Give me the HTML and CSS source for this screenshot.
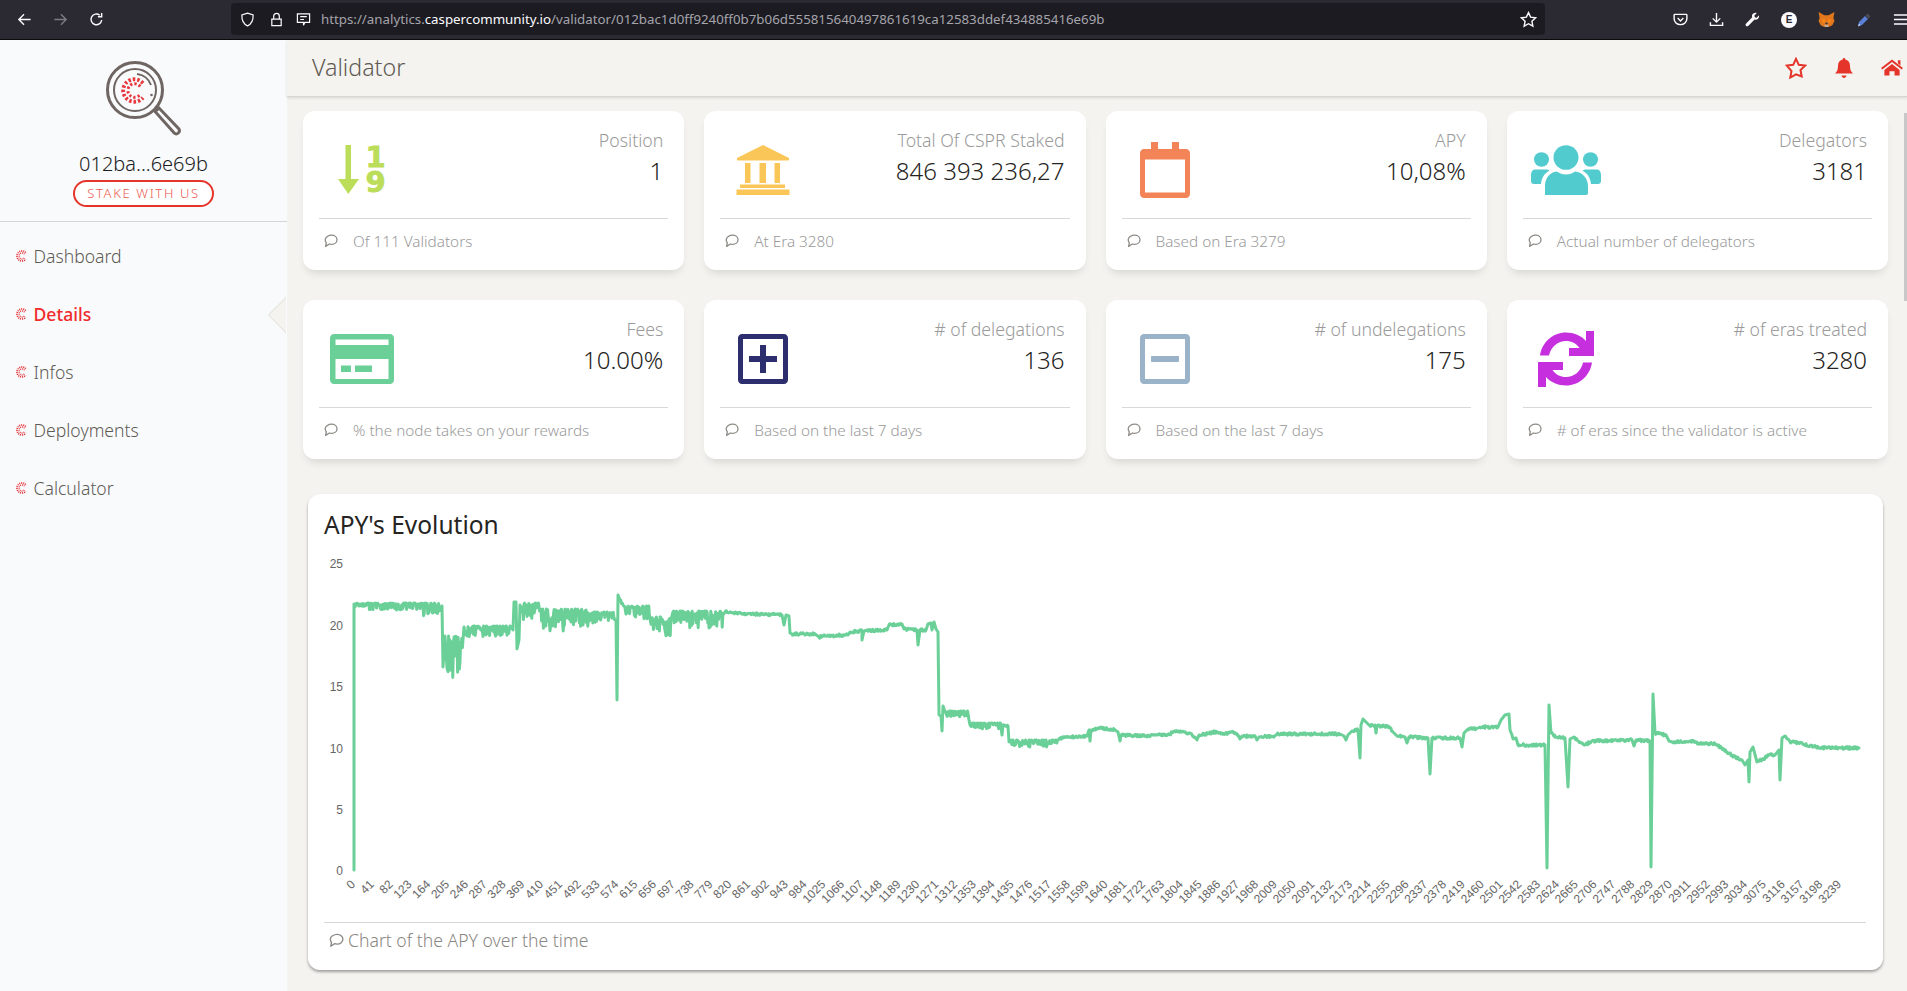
FILE: index.html
```html
<!DOCTYPE html>
<html lang="en">
<head>
<meta charset="utf-8">
<title>Validator</title>
<link rel="stylesheet" href="styles.css">
</head>
<body>
<svg class="defs" width="0" height="0" aria-hidden="true">
  <symbol id="cmark" viewBox="0 0 24 24">
    <path d="M19.5 5.5A10 10 0 1 0 19.5 18.5" fill="none" stroke="#e8383d" stroke-width="3.4" stroke-dasharray="2.2 1.7"/>
    <path d="M17 8.5A6 6 0 1 0 17 15.5" fill="none" stroke="#e8383d" stroke-width="2.6" stroke-dasharray="2 1.8"/>
  </symbol>
  <symbol id="bubble" viewBox="0 0 16 16">
    <path d="M8.6 2.2c3 0 5.4 2 5.4 4.6s-2.4 4.6-5.4 4.6c-.8 0-1.5-.1-2.2-.4L2.6 13.4l.7-3.6C2.6 9 2.2 7.9 2.2 6.800 2.200 4.200 5.600 2.200 8.600 2.200z" fill="none" stroke="#8d8a86" stroke-width="1.300" stroke-linejoin="round"/>
  </symbol>
</svg>

<div class="toolbar">
  <div class="tool-group nav-tools">
    <svg class="ti" viewBox="0 0 16 16"><path d="M14.500 8H2M7.500 2.500 2 8l5.500 5.500" /></svg>
    <svg class="ti dim" viewBox="0 0 16 16"><path d="M1.500 8H14M8.500 2.500 14 8l-5.500 5.500" /></svg>
    <svg class="ti" viewBox="0 0 16 16"><path d="M13.500 8.500A5.700 5.700 0 1 1 11.500 3.500M13.500 1v4h-4" /></svg>
  </div>
  <div class="urlbar">
    <svg class="ui shield" viewBox="0 0 16 16"><path d="M8 1.200 14 3.200c.2 6-2 9.800-6 11.600-4-1.800-6.200-5.600-6-11.600z" /></svg>
    <svg class="ui lock" viewBox="0 0 16 16"><path d="M3 7.500h10v7H3zM5 7.500V4.500a3 3 0 0 1 6 0v3" /></svg>
    <svg class="ui msg" viewBox="0 0 16 16"><path d="M1.500 2h13v9H9.500L8 14v-3H1.500zM4.500 5h7M4.500 8h4" /></svg>
    <span class="url">https://analytics.<b>caspercommunity.io</b>/validator/012bac1d0ff9240ff0b7b06d555815640497861619ca12583ddef434885416e69b</span>
    <svg class="ui urlstar" viewBox="0 0 16 16"><path d="m8 1.500 2 4.300 4.700.6-3.500 3.200.9 4.700L8 12l-4.100 2.300.9-4.700L1.300 6.400 6 5.800z" /></svg>
  </div>
  <div class="tool-group ext-tools">
    <svg class="ti" viewBox="0 0 16 16"><path d="M2 2.500h12c.5 0 .8.300.8.800v4c0 3.500-3 6.200-6.800 6.200S1.200 10.800 1.200 7.300v-4c0-.5.300-.8.800-.8zM5 6.500l3 3 3-3" /></svg>
    <svg class="ti" viewBox="0 0 16 16"><path d="M8 1v9.500M4 6.800l4 4 4-4M1.500 11v3.300h13V11" /></svg>
    <svg class="ti solid" viewBox="0 0 16 16"><path d="M15 3.500 12.300 6 10.500 5.500 10 3.700 12.500 1C10.500.4 8 1.300 7.500 3.500c-.2.800-.1 1.500.2 2.200L1 12.500c-.700.800-.300 1.800.2 2.300.6.500 1.500.6 2.200 0l6.800-6.700c2.500.8 5.300-.9 4.800-4.600z" /></svg>
    <span class="ext-e">E</span>
    <svg class="fox" viewBox="0 0 16 16"><path fill="#e2761b" d="M.500 1 6 4h4l5.500-3-1 5.500 1 3-2 4L10 15H6l-3.500-1.500-2-4 1-3z"/><path fill="#f6851b" d="M4 7l2.500.5L7 11H4zM12 7l-2.500.5L9 11h3z"/><path fill="#c0ad9e" d="M6 13h4l-.5 2h-3z"/><path fill="#233447" d="M6.500 11h3l-1 1.500h-1z"/></svg>
    <svg class="pen" viewBox="0 0 16 16"><path fill="#5b7fd6" d="M2 14.500 3 10l6-6 3 3-6 6z"/><path fill="#4a4a55" d="m9.500 3.500 2-2 3 3-2 2z"/><path fill="#cfd6f2" d="M2 14.500 3 11.500 4.500 13z"/></svg>
    <svg class="ti" viewBox="0 0 16 16"><path d="M1 3.200h14M1 8h14M1 12.800h14" /></svg>
  </div>
</div>

<div class="app">
  <aside class="sidebar">
    <div class="brand">
      <svg class="logo" viewBox="0 0 76 76">
        <circle class="ring" cx="29" cy="29" r="27.500"/>
        <circle class="ring thin" cx="29" cy="29" r="21"/>
        <path class="ring thin" d="M31 13A16.500 16.500 0 0 1 45 24"/>
        <circle cx="45.500" cy="34" r="1.300" fill="#6f6562"/>
        <path class="ring" d="M49 50.500l4-3.500 19.500 20.500c1.500 1.800 1 3.300-.2 4.500-1.300 1.200-3 1.200-4.300-.2z"/>
        <use href="#cmark" x="15" y="16" width="27" height="27"/>
      </svg>
      <div class="address">012ba...6e69b</div>
      <a class="stake">STAKE WITH US</a>
    </div>
    <nav class="menu">
      <a class="menu-item"><svg class="mi"><use href="#cmark"/></svg>Dashboard</a>
      <a class="menu-item active"><svg class="mi"><use href="#cmark"/></svg>Details</a>
      <a class="menu-item"><svg class="mi"><use href="#cmark"/></svg>Infos</a>
      <a class="menu-item"><svg class="mi"><use href="#cmark"/></svg>Deployments</a>
      <a class="menu-item"><svg class="mi"><use href="#cmark"/></svg>Calculator</a>
    </nav>
  </aside>

  <main class="main">
    <header class="topbar">
      <h1 class="page-title">Validator</h1>
      <div class="top-icons">
        <svg class="ri star" viewBox="0 0 22 22"><path d="m11 1.800 2.800 6 6.400.8-4.700 4.400 1.200 6.500L11 17.300l-5.700 3.200 1.200-6.500L1.800 8.600l6.400-.8z"/></svg>
        <svg class="ri bell" viewBox="0 0 18 20"><path d="M9 0c.8 0 1.300.6 1.300 1.400C13 2 15 4.200 15 7.500c0 4.500 1 6 3 8H0c2-2 3-3.500 3-8 0-3.300 2-5.500 4.700-6.100C7.700.6 8.200 0 9 0zM6.500 17.500h5C11.200 19 10.200 20 9 20s-2.200-1-2.500-2.500z"/></svg>
        <svg class="ri home" viewBox="0 0 26 19"><path d="M13 0 26 10l-1.500 1.800L13 3 1.500 11.800 0 10zM20 1h3v6l-3-2.400zM4 12.500 13 5.500l9 7V19h-6v-5h-6v5H4z"/></svg>
      </div>
    </header>

    <div class="scrollthumb"></div>

    <div class="content">
      <section class="stats">
        <article class="card">
          <div class="card-body">
            <div class="icon-slot">
              <div class="sort-icon">
                <svg width="21" height="49" viewBox="0 0 21 49"><path fill="currentColor" d="M7.500 0h5.500v34h8L10.300 49 0 34h7.500z"/></svg>
                <div class="sort-digits"><span>1</span><span>9</span></div>
              </div>
            </div>
            <div class="numbers"><p class="label">Position</p><p class="value">1</p></div>
          </div>
          <div class="card-foot"><svg class="bub"><use href="#bubble"/></svg><span>Of 111 Validators</span></div>
        </article>
        <article class="card">
          <div class="card-body">
            <div class="icon-slot">
              <svg class="ic" width="54" height="50" viewBox="0 0 54 50" style="color:#fbc658"><path fill="currentColor" d="M27 0 53 13v1.500c0 .6-.4 1-1 1H2c-.6 0-1-.4-1-1V13zM9 18h5.500v20H9zM23.500 18H30v20h-6.500zM38.500 18H44v20h-5.500zM4 39.500h45V43H4zM.5 44.500h53V50H.5z"/></svg>
            </div>
            <div class="numbers"><p class="label">Total Of CSPR Staked</p><p class="value">846 393 236,27</p></div>
          </div>
          <div class="card-foot"><svg class="bub"><use href="#bubble"/></svg><span>At Era 3280</span></div>
        </article>
        <article class="card">
          <div class="card-body">
            <div class="icon-slot">
              <svg class="ic" width="50" height="56" viewBox="0 0 50 56" style="color:#f38458"><path fill="currentColor" fill-rule="evenodd" d="M11 0h7v7h14V0h7v7h7c2.200 0 4 1.800 4 4v41c0 2.200-1.800 4-4 4H4c-2.200 0-4-1.800-4-4V11c0-2.200 1.800-4 4-4h7zM5 17.500v33h40v-33z"/></svg>
            </div>
            <div class="numbers"><p class="label">APY</p><p class="value">10,08%</p></div>
          </div>
          <div class="card-foot"><svg class="bub"><use href="#bubble"/></svg><span>Based on Era 3279</span></div>
        </article>
        <article class="card">
          <div class="card-body">
            <div class="icon-slot">
              <svg class="ic" width="70" height="50" viewBox="0 0 70 50" style="color:#51cbce"><g fill="currentColor"><ellipse cx="35" cy="12.500" rx="12.500" ry="12.300"/><ellipse cx="10.500" cy="14.500" rx="7.500" ry="7.300"/><ellipse cx="59.500" cy="14.500" rx="7.500" ry="7.300"/><path d="M14 50V41c0-8 5-14 12-14.500 2.500 2 5.500 3 9 3s6.500-1 9-3C51 27 57 33 57 41v7c0 1-1 2-2 2z"/><path d="M4 24.500h11c1.500 0 2.500.4 3.500 1.300C13.500 28 10.500 33 10 39H3c-1.700 0-3-1.300-3-3v-6c0-3 1.500-5.500 4-5.500zM66 24.500H55c-1.500 0-2.500.4-3.500 1.300C56.500 28 59.500 33 60 39h7c1.700 0 3-1.300 3-3v-6c0-3-1.500-5.500-4-5.500z"/></g></svg>
            </div>
            <div class="numbers"><p class="label">Delegators</p><p class="value">3181</p></div>
          </div>
          <div class="card-foot"><svg class="bub"><use href="#bubble"/></svg><span>Actual number of delegators</span></div>
        </article>

        <article class="card">
          <div class="card-body">
            <div class="icon-slot">
              <svg class="ic" width="64" height="50" viewBox="0 0 64 50" style="color:#6bd098"><path fill="currentColor" fill-rule="evenodd" d="M4 0h56c2.200 0 4 1.800 4 4v42c0 2.200-1.800 4-4 4H4c-2.200 0-4-1.800-4-4V4c0-2.200 1.800-4 4-4zM5.500 5.500V11h53V5.500zM5.500 25v20h53V25zM11 31.500h10v6.500H11zM25 31.500h17v6.500H25z"/></svg>
            </div>
            <div class="numbers"><p class="label">Fees</p><p class="value">10.00%</p></div>
          </div>
          <div class="card-foot"><svg class="bub"><use href="#bubble"/></svg><span>% the node takes on your rewards</span></div>
        </article>
        <article class="card">
          <div class="card-body">
            <div class="icon-slot">
              <svg class="ic" width="50" height="50" viewBox="0 0 50 50" style="color:#2c2e6d"><path fill="currentColor" fill-rule="evenodd" d="M4 0h42c2.200 0 4 1.800 4 4v42c0 2.200-1.800 4-4 4H4c-2.200 0-4-1.800-4-4V4c0-2.200 1.800-4 4-4zM5 5v40h40V5zM22 11h6v11h11v6H28v11h-6V28H11v-6h11z"/></svg>
            </div>
            <div class="numbers"><p class="label"># of delegations</p><p class="value">136</p></div>
          </div>
          <div class="card-foot"><svg class="bub"><use href="#bubble"/></svg><span>Based on the last 7 days</span></div>
        </article>
        <article class="card">
          <div class="card-body">
            <div class="icon-slot">
              <svg class="ic" width="50" height="50" viewBox="0 0 50 50" style="color:#9ab3c8"><path fill="currentColor" fill-rule="evenodd" d="M4 0h42c2.200 0 4 1.800 4 4v42c0 2.200-1.800 4-4 4H4c-2.200 0-4-1.800-4-4V4c0-2.200 1.800-4 4-4zM5 5v40h40V5zM12 22h26c.6 0 1 .4 1 1v4c0 .6-.4 1-1 1H12c-.6 0-1-.4-1-1v-4c0-.6.4-1 1-1z"/></svg>
            </div>
            <div class="numbers"><p class="label"># of undelegations</p><p class="value">175</p></div>
          </div>
          <div class="card-foot"><svg class="bub"><use href="#bubble"/></svg><span>Based on the last 7 days</span></div>
        </article>
        <article class="card">
          <div class="card-body">
            <div class="icon-slot">
              <svg class="ic" width="56" height="56" viewBox="0 0 56 56" style="color:#c62fde"><path fill="currentColor" d="M56 0v25H31v-8h10.500C38.500 12.500 33.500 10 28 10c-8 0-15 5.500-17 14.500H2C4 11 15 1.500 28 1.500c8 0 15 3 20 8.500V0zM0 56V31h25v8H14.500c3 4.500 8 7 13.500 7 8 0 15-5.500 17-14.500h9C52 45 41 54.500 28 54.500c-8 0-15-3-20-8.500v10z"/></svg>
            </div>
            <div class="numbers"><p class="label"># of eras treated</p><p class="value">3280</p></div>
          </div>
          <div class="card-foot"><svg class="bub"><use href="#bubble"/></svg><span># of eras since the validator is active</span></div>
        </article>
      </section>

      <section class="chart-card">
        <h2 class="chart-title">APY's Evolution</h2>
        <svg id="apy" class="chart" viewBox="324 546 1542 376"></svg>
        <div class="chart-foot"><svg class="bub big"><use href="#bubble"/></svg><span>Chart of the APY over the time</span></div>
      </section>
    </div>
  </main>
</div>
<script src="chart.js"></script>
</body>
</html>
```

FILE: styles.css
```css
* { box-sizing: border-box; }
html, body { margin: 0; height: 991px; overflow: hidden; }
body { font-family: "Noto Sans", "Liberation Sans", sans-serif; background: #f4f3ef; color: #252422; }
.defs { position: absolute; }
p, h1, h2 { margin: 0; font-weight: 300; }

.toolbar { height: 40px; background: #2b2a33; border-bottom: 1px solid #0c0c0d; display: flex; align-items: flex-start; }
.tool-group { display: flex; align-items: center; height: 39px; }
.nav-tools { width: 231px; flex: none; padding-left: 17px; gap: 21px; }
.ext-tools { flex: 1; padding-left: 128px; gap: 21px; }
.ti { width: 15px; height: 15px; flex: none; fill: none; stroke: #fbfbfe; stroke-width: 1.500; }
.ti.dim { stroke: #7d7c84; }
.ti.solid { fill: #fbfbfe; stroke: none; }
.urlbar { width: 1314px; flex: none; height: 32px; margin-top: 3px; background: #1c1b22; border-radius: 4px; display: flex; align-items: center; padding: 0 9px; }
.ui { width: 15px; height: 15px; flex: none; fill: none; stroke: #fbfbfe; stroke-width: 1.300; }
.lock { margin-left: 14px; }
.msg { margin-left: 12px; }
.url { margin-left: 10px; font: 13.300px/32px "Noto Sans", sans-serif; color: #a5a4aa; white-space: nowrap; flex: 1; }
.url b { font-weight: 400; color: #fbfbfe; }
.urlstar { width: 17px; height: 17px; margin-right: -1px; }
.ext-e { width: 16px; height: 16px; flex: none; border-radius: 50%; background: #fbfbfe; color: #2b2a33; font: 700 10px/16px "Liberation Sans", sans-serif; text-align: center; }
.fox { width: 17px; height: 17px; flex: none; }
.pen { width: 16px; height: 16px; flex: none; }

.app { display: flex; height: 951px; }
.sidebar { width: 287px; flex: none; background: #f8fafc; }
.brand { height: 182px; border-bottom: 1px solid #d5d5d5; display: flex; flex-direction: column; align-items: center; padding-top: 21px; }
.logo { width: 76px; height: 76px; margin-left: 1px; display: block; }
.ring { fill: none; stroke: #6f6562; stroke-width: 3; }
.ring.thin { stroke-width: 2; }
.address { font-size: 20px; line-height: 26px; font-weight: 300; color: #1c1c1c; margin-top: 14px; }
.stake { margin-top: 3px; width: 141px; height: 27px; border: 2px solid #e5352b; border-radius: 14px; color: #ec5a50; font-size: 13px; line-height: 23px; letter-spacing: 1.650px; text-align: center; font-weight: 300; background: #fff; }
.menu { padding-top: 5px; display: flex; flex-direction: column; }
.menu-item { height: 58px; display: flex; align-items: center; padding-left: 16px; padding-bottom: 1px; font-size: 17.600px; font-weight: 300; color: #5f5a54; }
.menu-item.active { color: #ef2b2b; font-weight: 500; position: relative; }
.menu-item.active::after { content: ""; position: absolute; right: -12px; top: 17px; width: 24px; height: 24px; background: #f4f3ef; border: 1px solid #e3e1dc; transform: rotate(45deg); clip-path: polygon(0 0, 0 100%, 100% 100%); }
.mi { width: 12px; height: 12px; margin-right: 5.500px; flex: none; }

.main { flex: 1; min-width: 0; position: relative; }
.topbar { height: 57px; display: flex; justify-content: space-between; align-items: center; padding: 0 4px 1px 25px; border-bottom: 1px solid #d8d6d1; box-shadow: 0 1px 3px rgba(0,0,0,.12); }
.page-title { font-size: 23.200px; line-height: 30px; margin-bottom: 2px; font-weight: 300; color: #5f5a54; }
.top-icons { display: flex; align-items: center; gap: 28px; }
.ri { display: block; fill: #e5352b; }
.star { width: 22px; height: 22px; fill: none; stroke: #e5352b; stroke-width: 2; }
.bell { width: 18px; height: 20px; }
.home { width: 22px; height: 19px; }
.scrollthumb { position: absolute; right: 0; top: 73px; width: 3px; height: 188px; background: #c8c8c8; }

.content { padding: 14px 19px 0 16px; }
.stats { display: grid; grid-template-columns: repeat(4, 1fr); gap: 30px 20px; }
.card { height: 159px; padding: 0 16px; background: #fff; border-radius: 12px; box-shadow: 0 6px 10px -4px rgba(0,0,0,.15); }
.card-body { height: 107px; padding-top: 16px; display: flex; justify-content: space-between; }
.icon-slot { width: 86px; height: 86px; flex: none; display: flex; align-items: center; justify-content: center; }
.ic { display: block; flex: none; }
.sort-icon { display: flex; gap: 6px; color: #bbdd59; }
.sort-icon svg { display: block; }
.sort-digits { display: flex; flex-direction: column; width: 21px; font: 700 29px/25px "DejaVu Sans", sans-serif; text-align: center; -webkit-text-stroke: .8px currentColor; }
.sort-digits span { display: block; height: 25px; }
.numbers { text-align: right; padding: 1px 5px 0 0; }
.label { font-size: 17.700px; line-height: 24px; color: #9a9a9a; font-weight: 300; }
.value { font-size: 24px; line-height: 36px; color: #252422; margin-top: 1px; font-weight: 300; }
.card-foot { height: 52px; border-top: 1px solid #d8d8d8; display: flex; align-items: center; padding: 0 0 7px 4px; font-size: 15.300px; font-weight: 300; color: #9a9a9a; }
.bub { width: 16px; height: 16px; flex: none; margin-right: 14px; }

.chart-card { height: 476px; margin: 35px 5px 0; padding: 0 17px 0 16px; background: #fff; border-radius: 12px; box-shadow: 0 2px 3px rgba(0,0,0,.35); }
.chart-title { font: 400 24.500px/32px "Noto Sans", sans-serif; color: #252422; padding-top: 15px; height: 52px; }
.chart { display: block; width: 1542px; height: 376px; }
.chart-foot { border-top: 1px solid #d8d8d8; height: 40px; padding: 0 0 5px 4px; display: flex; align-items: center; font: 300 17.600px/24px "Noto Sans", sans-serif; color: #8a8782; }
.bub.big { width: 17px; height: 17px; margin-right: 3px; }
.ylab, .xlab { font: 12px "Liberation Sans", Arial, sans-serif; fill: #666; }
```

FILE: chart.js
```js
(function () {
  var NS = 'http://www.w3.org/2000/svg';
  var svg = document.getElementById('apy');
  var seed = 1337;
  function rnd() {
    seed = (seed * 1664525 + 1013904223) >>> 0;
    return seed / 4294967296;
  }
  function el(name, attrs, text) {
    var node = document.createElementNS(NS, name);
    for (var k in attrs) node.setAttribute(k, attrs[k]);
    if (text !== undefined) node.textContent = text;
    svg.appendChild(node);
  }

  [[25, 564], [20, 626], [15, 687], [10, 749], [5, 810], [0, 871]].forEach(function (t) {
    el('text', { x: 343, y: t[1] + 4, 'text-anchor': 'end', 'class': 'ylab' }, t[0]);
  });
  for (var era = 0; era <= 3239; era += 41) {
    var tx = 354 + era * 0.4588 + 2;
    el('text', { x: tx, y: 885, 'text-anchor': 'end', 'class': 'xlab', transform: 'rotate(-45 ' + tx + ' 885)' }, era);
  }

  // Trace in page pixels: [x, y] is a point, [x0, x1, top, bottom] is a noisy stretch.
  var trace = [
    [354, 870], [354, 604],
    [355, 420, 603, 610], [420, 441, 603, 616],
    [442, 606], [443, 667], [445, 636], [447, 668],
    [448, 463, 636, 682],
    [464, 627], [465, 511, 626, 637],
    [513, 630], [514, 602], [516, 602], [517, 649], [519, 640], [520, 605],
    [521, 540, 603, 620], [541, 590, 609, 631], [591, 615, 612, 623],
    [616, 620], [617, 700], [618, 595], [620, 600], [625, 608],
    [626, 650, 606, 619], [651, 672, 617, 636], [673, 723, 611, 628],
    [725, 612], [730, 612], [733, 613], [782, 615], [784, 625], [786, 615], [789, 616], [790, 633], [792, 634],
    [815, 634], [819, 637], [825, 636], [848, 635], [850, 632], [862, 631], [862, 640], [864, 631],
    [887, 630], [889, 625], [902, 624], [904, 629], [917, 630], [918, 645], [920, 630], [926, 630], [928, 624], [931, 623], [932, 630], [934, 622], [936, 629],
    [938, 632], [939, 715], [941, 716], [942, 731], [943, 706], [945, 712],
    [946, 968, 711, 717], [969, 720], [970, 725], [971, 1001, 723, 729], [1002, 735], [1003, 725], [1008, 726],
    [1009, 742], [1010, 1058, 740, 747], [1060, 738], [1070, 737], [1087, 736], [1089, 730], [1090, 741], [1091, 730], [1100, 728],
    [1115, 730], [1118, 732], [1120, 741], [1121, 735], [1145, 736], [1160, 735], [1170, 734], [1175, 731], [1190, 733], [1195, 737], [1197, 740], [1199, 735],
    [1215, 732], [1225, 734], [1232, 732], [1238, 735], [1240, 739], [1242, 736], [1255, 736], [1257, 740], [1259, 737], [1275, 736],
    [1277, 734], [1340, 734], [1344, 736], [1346, 740], [1348, 735], [1352, 731], [1358, 730],
    [1360, 758], [1361, 725], [1363, 719], [1366, 722], [1370, 726], [1375, 725], [1376, 733], [1377, 726], [1388, 726], [1393, 732], [1397, 736], [1405, 737], [1407, 743], [1409, 737],
    [1428, 738], [1430, 774], [1432, 738], [1460, 738], [1462, 747], [1464, 733], [1468, 729], [1476, 729], [1480, 727], [1498, 727], [1501, 720], [1505, 715], [1509, 714], [1510, 730], [1512, 735], [1513, 739], [1516, 738], [1518, 745],
    [1545, 745], [1547, 868], [1549, 705], [1551, 733], [1556, 737], [1565, 738], [1568, 787], [1570, 739], [1574, 737], [1580, 742], [1585, 745],
    [1592, 741], [1632, 740], [1634, 746], [1636, 740], [1650, 741], [1651, 867], [1653, 694], [1655, 733], [1666, 735], [1669, 741], [1672, 742],
    [1690, 741], [1698, 743], [1715, 744], [1722, 748], [1727, 752], [1735, 757], [1742, 760], [1745, 765], [1748, 760], [1749, 782], [1750, 752], [1753, 747], [1757, 762], [1765, 758], [1770, 754], [1775, 755], [1779, 750], [1780, 780], [1782, 738], [1785, 736], [1790, 742],
    [1800, 743], [1810, 746], [1825, 748], [1859, 748]
  ];

  var pts = [];
  trace.forEach(function (seg) {
    if (seg.length === 4) {
      for (var x = seg[0]; x <= seg[1]; x += 0.6) {
        var r = rnd();
        pts.push([x, seg[2] + (seg[3] - seg[2]) * r * r]);
      }
      return;
    }
    var prev = pts[pts.length - 1];
    // Long, gentle stretches carry a fine tremor, as the real series does.
    if (prev && seg[0] - prev[0] > 4 && Math.abs(seg[1] - prev[1]) < 12) {
      var steps = Math.floor((seg[0] - prev[0]) * 1.5);
      for (var s = 1; s < steps; s++) {
        var t = s / steps;
        pts.push([prev[0] + (seg[0] - prev[0]) * t, prev[1] + (seg[1] - prev[1]) * t + (rnd() - 0.5) * 2.6]);
      }
    }
    pts.push(seg);
  });
  el('path', {
    d: 'M' + pts.map(function (p) { return p[0].toFixed(1) + ' ' + p[1].toFixed(1); }).join('L'),
    fill: 'none', stroke: '#6bd098', 'stroke-width': 3, 'stroke-linejoin': 'round', 'stroke-linecap': 'round'
  });
})();
```
